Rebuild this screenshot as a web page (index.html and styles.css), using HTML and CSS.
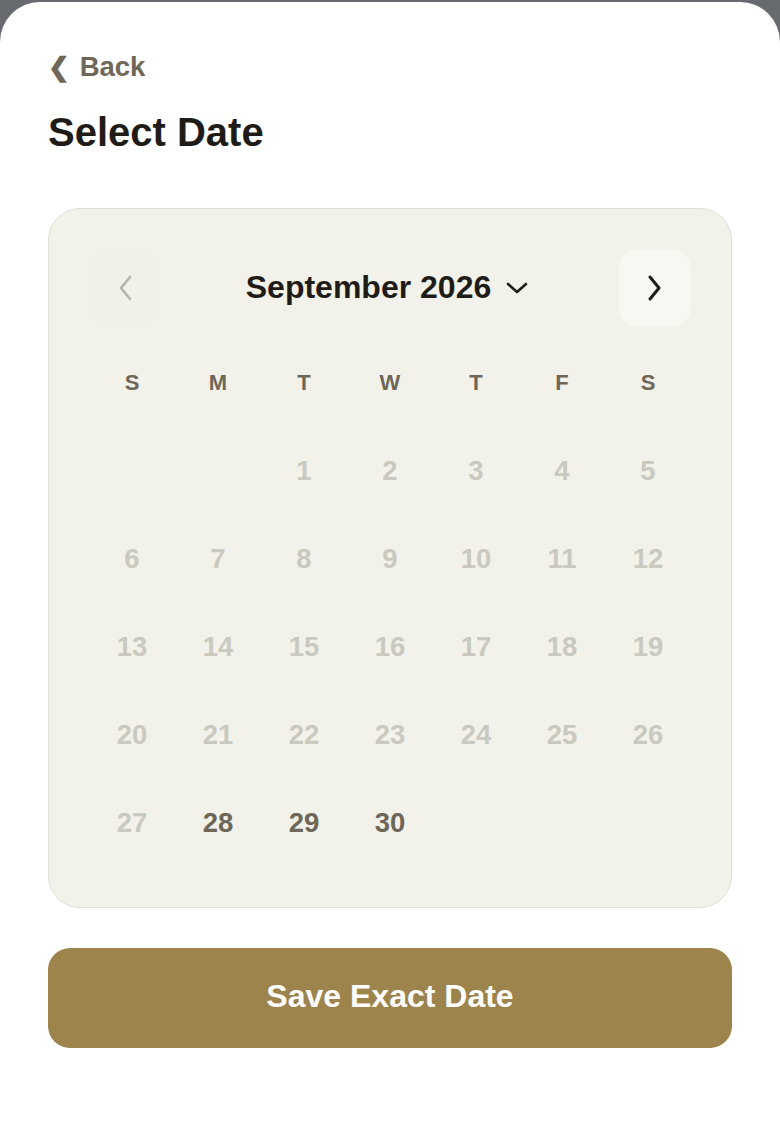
FILE: index.html
```html
<!DOCTYPE html>
<html>
<head>
<meta charset="utf-8">
<link rel="stylesheet" href="styles.css">
</head>
<body>
<div class="sheet">
  <div class="back"><span class="back-icon">❮</span> Back</div>
  <h1 class="title">Select Date</h1>
  <div class="card">
    <div class="cal-head">
      <div class="nav nav-prev">
        <svg width="26" height="30" viewBox="0 0 26 30"><path d="M18 4 L9 15 L18 26" fill="none" stroke="#b6b5ac" stroke-width="2.6" stroke-linecap="round" stroke-linejoin="round"/></svg>
      </div>
      <div class="month">September 2026
        <svg class="caret" width="24" height="16" viewBox="0 0 24 16"><path d="M3 4 L12 12 L21 4" fill="none" stroke="#1f1c17" stroke-width="2.6" stroke-linecap="round" stroke-linejoin="round"/></svg>
      </div>
      <div class="nav nav-next">
        <svg width="26" height="30" viewBox="0 0 26 30"><path d="M8 4 L17 15 L8 26" fill="none" stroke="#1f1c17" stroke-width="3" stroke-linecap="round" stroke-linejoin="round"/></svg>
      </div>
    </div>
    <div class="grid">
      <div class="dow">S</div><div class="dow">M</div><div class="dow">T</div><div class="dow">W</div><div class="dow">T</div><div class="dow">F</div><div class="dow">S</div>
      <div class="day"></div><div class="day"></div>
      <div class="day off">1</div><div class="day off">2</div><div class="day off">3</div><div class="day off">4</div><div class="day off">5</div>
      <div class="day off">6</div><div class="day off">7</div><div class="day off">8</div><div class="day off">9</div><div class="day off">10</div><div class="day off">11</div><div class="day off">12</div>
      <div class="day off">13</div><div class="day off">14</div><div class="day off">15</div><div class="day off">16</div><div class="day off">17</div><div class="day off">18</div><div class="day off">19</div>
      <div class="day off">20</div><div class="day off">21</div><div class="day off">22</div><div class="day off">23</div><div class="day off">24</div><div class="day off">25</div><div class="day off">26</div>
      <div class="day off">27</div><div class="day">28</div><div class="day">29</div><div class="day">30</div><div class="day"></div><div class="day"></div><div class="day"></div>
    </div>
  </div>
  <button class="save">Save Exact Date</button>
</div>
</body>
</html>
```
FILE: styles.css
```css
html, body {
  margin: 0;
  padding: 0;
}
body {
  background: #676a6f;
  font-family: "Liberation Sans", Arial, sans-serif;
  width: 780px;
  height: 1128px;
  overflow: hidden;
}
.sheet {
  margin-top: 2px;
  background: #ffffff;
  border-radius: 40px 40px 0 0;
  padding: 49px 48px 0 48px;
  height: 1126px;
  box-sizing: border-box;
}
.back {
  font-size: 27.5px;
  font-weight: bold;
  color: #6f6757;
  line-height: 32px;
  height: 32px;
}
.back-icon {
  font-size: 26px;
  margin-right: 2px;
}
.title {
  margin: 26px 0 0 0;
  font-size: 40px;
  line-height: 46px;
  font-weight: bold;
  color: #1f1c17;
}
.card {
  margin-top: 53px;
  background: #f2f2ea;
  border: 1.5px solid #dfdfd2;
  border-radius: 32px;
  padding: 41px 40px 40px 40px;
}
.cal-head {
  display: flex;
  align-items: center;
  justify-content: space-between;
  height: 76px;
}
.nav {
  width: 72px;
  height: 76px;
  border-radius: 18px;
  display: flex;
  align-items: center;
  justify-content: center;
}
.nav-prev {
  background: #f1f1e9;
}
.nav-next {
  background: #f8f8f3;
}
.month {
  font-size: 32px;
  font-weight: bold;
  color: #1f1c17;
  display: flex;
  align-items: center;
  gap: 14px;
  margin-top: -2px;
  margin-right: 5px;
}
.caret {
  margin-top: 2px;
}
.grid {
  margin-top: 13px;
  display: grid;
  grid-template-columns: repeat(7, 1fr);
  grid-auto-rows: 88px;
}
.dow, .day {
  display: flex;
  align-items: center;
  justify-content: center;
  font-weight: bold;
}
.dow {
  font-size: 22px;
  color: #6e6759;
  margin-top: -1px;
}
.day {
  font-size: 27.5px;
  color: #6e6759;
}
.day.off {
  color: #c9c9bf;
}
.save {
  display: block;
  width: 100%;
  margin-top: 40px;
  height: 100px;
  border: none;
  border-radius: 22px;
  background: #9d834c;
  color: #ffffff;
  font-family: "Liberation Sans", Arial, sans-serif;
  font-size: 32px;
  font-weight: bold;
  padding: 0 0 4px 0;
}
```
